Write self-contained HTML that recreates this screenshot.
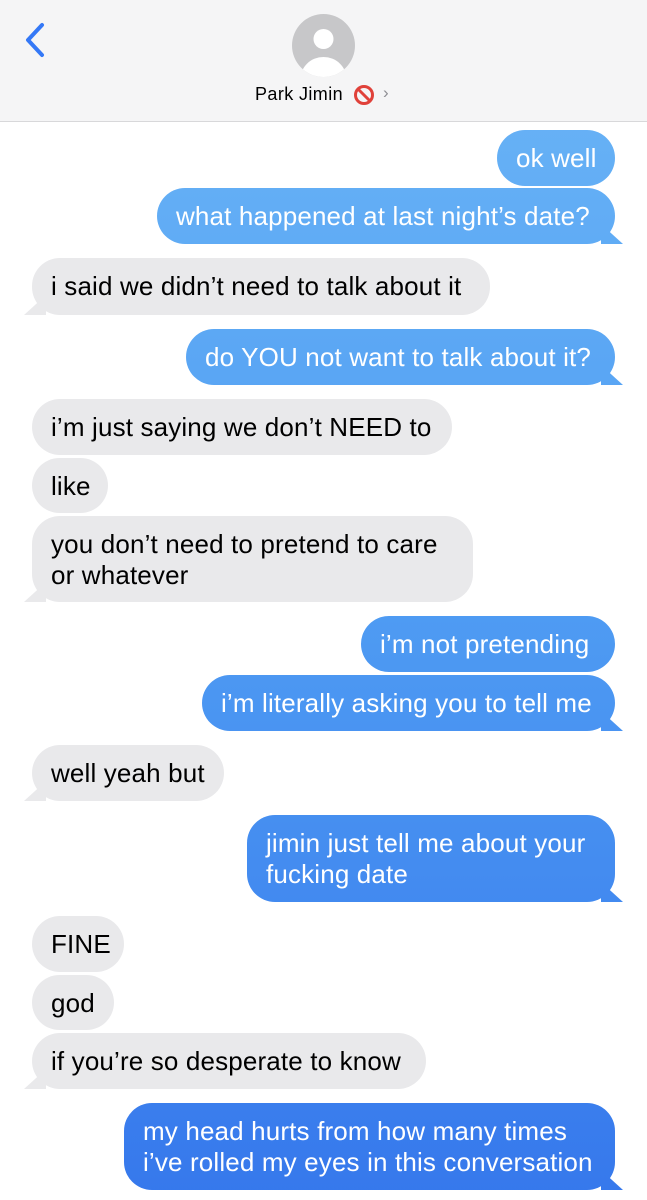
<!DOCTYPE html>
<html><head><meta charset="utf-8"><style>
*{margin:0;padding:0;box-sizing:border-box}
body{width:647px;height:1200px;background:#fff;position:relative;overflow:hidden;font-family:"Liberation Sans",Arial,sans-serif}
.hdr{position:absolute;left:0;top:0;width:647px;height:122px;background:#f5f5f6;border-bottom:1px solid #d8d8da}
.b{position:absolute;border-radius:28px;font-size:26px;line-height:31px;padding:13px 0 0 19px;white-space:nowrap;letter-spacing:0.15px}
.g{background:#e9e9eb;color:#000}
.u{color:#fff;background:linear-gradient(180deg,#6cb6f6 0px,#4f9cf3 600px,#3678ec 1200px);background-attachment:fixed;text-align:left}
.tl:after{content:"";position:absolute;left:-8px;bottom:0;width:22px;height:20px;background:#e9e9eb;clip-path:polygon(0 100%,100% 0,100% 100%)}
.tr:after{content:"";position:absolute;right:-8px;bottom:0;width:22px;height:20px;background:inherit;background-attachment:fixed;clip-path:polygon(100% 100%,0 0,0 100%)}
</style></head><body>
<div class="hdr">
<svg style="position:absolute;left:22px;top:22px" width="26" height="36" viewBox="0 0 26 36"><path d="M20 3 L6 18 L20 33" fill="none" stroke="#3478f6" stroke-width="4" stroke-linecap="round" stroke-linejoin="round"/></svg>
<svg style="position:absolute;left:292px;top:14px" width="63" height="63" viewBox="0 0 63 63"><defs><clipPath id="c"><circle cx="31.5" cy="31.5" r="31.5"/></clipPath></defs><circle cx="31.5" cy="31.5" r="31.5" fill="#c7c7c9"/><g clip-path="url(#c)" fill="#fff"><circle cx="31.5" cy="25" r="10"/><ellipse cx="31.5" cy="65" rx="23" ry="22"/></g></svg>
<div style="position:absolute;left:255px;top:84px;font-size:18px;color:#000;letter-spacing:0.4px">Park Jimin</div>
<svg style="position:absolute;left:353px;top:84px" width="22" height="22" viewBox="0 0 22 22"><circle cx="11" cy="11" r="8.5" fill="none" stroke="#e0413a" stroke-width="3"/><path d="M5 5 L17 17" stroke="#e0413a" stroke-width="3"/></svg>
<div style="position:absolute;left:383px;top:83px;font-size:17px;color:#8e8e93">›</div>
</div>

<div class="b u" style="left:497px;top:130px;width:118px;height:56px">ok well</div>
<div class="b u tr" style="left:157px;top:188px;width:458px;height:56px">what happened at last night’s date?</div>
<div class="b g tl" style="left:32px;top:258px;width:458px;height:57px">i said we didn’t need to talk about it</div>
<div class="b u tr" style="left:186px;top:329px;width:429px;height:56px">do YOU not want to talk about it?</div>
<div class="b g" style="left:32px;top:399px;width:420px;height:56px">i’m just saying we don’t NEED to</div>
<div class="b g" style="left:32px;top:458px;width:76px;height:55px">like</div>
<div class="b g tl" style="left:32px;top:516px;width:441px;height:86px">you don’t need to pretend to care<br>or whatever</div>
<div class="b u" style="left:361px;top:616px;width:254px;height:56px">i’m not pretending</div>
<div class="b u tr" style="left:202px;top:675px;width:413px;height:56px">i’m literally asking you to tell me</div>
<div class="b g tl" style="left:32px;top:745px;width:192px;height:56px">well yeah but</div>
<div class="b u tr" style="left:247px;top:815px;width:368px;height:87px">jimin just tell me about your<br>fucking date</div>
<div class="b g" style="left:32px;top:916px;width:92px;height:56px">FINE</div>
<div class="b g" style="left:32px;top:975px;width:82px;height:55px">god</div>
<div class="b g tl" style="left:32px;top:1033px;width:394px;height:56px">if you’re so desperate to know</div>
<div class="b u tr" style="left:124px;top:1103px;width:491px;height:87px">my head hurts from how many times<br>i’ve rolled my eyes in this conversation</div>
</body></html>
